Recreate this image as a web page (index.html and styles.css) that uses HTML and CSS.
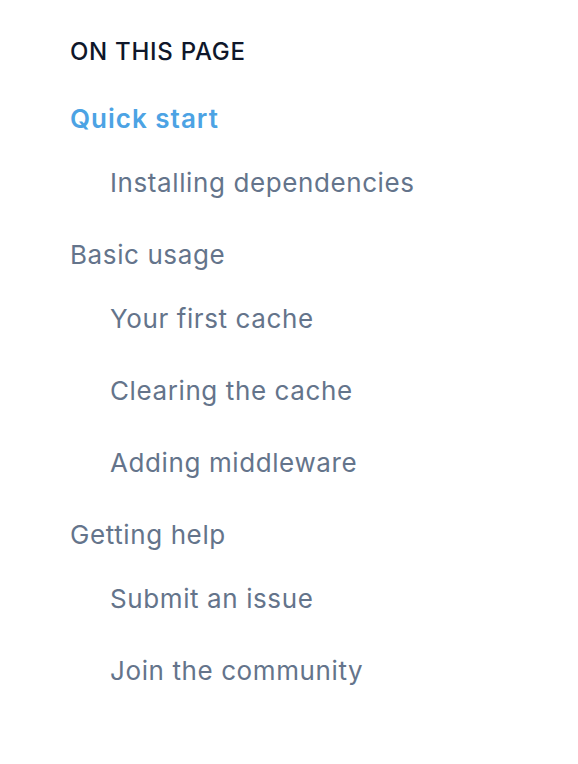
FILE: index.html
```html
<!DOCTYPE html>
<html lang="en">
<head>
<meta charset="utf-8">
<link rel="stylesheet" href="styles.css">
</head>
<body>
<nav class="toc">
  <h2 class="toc-title">On this page</h2>
  <ol class="toc-list">
    <li>
      <a class="toc-link active" href="#">Quick start</a>
      <ol class="toc-sub">
        <li><a class="toc-link" href="#">Installing dependencies</a></li>
      </ol>
    </li>
    <li>
      <a class="toc-link" href="#">Basic usage</a>
      <ol class="toc-sub">
        <li><a class="toc-link" href="#">Your first cache</a></li>
        <li><a class="toc-link" href="#">Clearing the cache</a></li>
        <li><a class="toc-link" href="#">Adding middleware</a></li>
      </ol>
    </li>
    <li>
      <a class="toc-link" href="#">Getting help</a>
      <ol class="toc-sub">
        <li><a class="toc-link" href="#">Submit an issue</a></li>
        <li><a class="toc-link" href="#">Join the community</a></li>
      </ol>
    </li>
  </ol>
</nav>
</body>
</html>
```
FILE: styles.css
```css
html, body {
  margin: 0;
  padding: 0;
  background: #ffffff;
}
body {
  font-family: Inter, "Noto Sans", sans-serif;
  -webkit-font-smoothing: antialiased;
}
.toc {
  padding: 36px 0 0 70px;
}
.toc-title {
  margin: 0;
  font-size: 24px;
  line-height: 32px;
  font-weight: 500;
  text-transform: uppercase;
  letter-spacing: 0.03em;
  color: #0f172a;
}
.toc-list, .toc-sub {
  list-style: none;
  margin: 0;
  padding: 0;
  display: flex;
  flex-direction: column;
  gap: 32px;
}
.toc-list {
  margin-top: 31px;
}
.toc-sub {
  margin-top: 24px;
  padding-left: 40px;
}
.toc-link {
  display: block;
  font-size: 26px;
  line-height: 40px;
  letter-spacing: 0.6px;
  color: #64748b;
  text-decoration: none;
}
.toc-link.active {
  color: #4ca3e4;
  font-weight: 600;
  letter-spacing: 1px;
}
```
